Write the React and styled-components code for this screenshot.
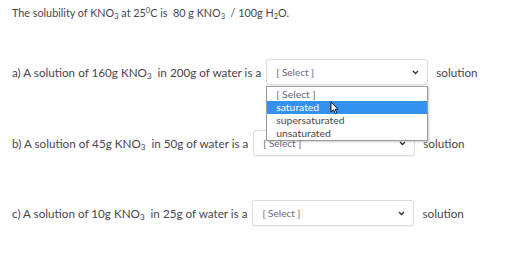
import React from "react";
import styled, { createGlobalStyle } from "styled-components";

const Global = createGlobalStyle`
  html, body { margin: 0; padding: 0; background: #fff; }
  body { font-family: Lato, "Open Sans", sans-serif; color: #4a4a4a; }
`;

const Page = styled.div`
  width: 516px;
  height: 265px;
  padding: 6px 0 0 12px;
  box-sizing: border-box;
`;

const Title = styled.p`
  margin: 0;
  font-size: 10.8px;
  line-height: 14px;
  color: #4a4550;
  sub { font-size: 7.5px; vertical-align: -2px; line-height: 0; }
  sup { font-size: 7.5px; vertical-align: 4px; line-height: 0; }
`;

const Row = styled.div`
  display: flex;
  align-items: center;
  margin-top: ${(p) => p.$top}px;
  height: 26px;
  font-size: 11.7px;
  color: #4a4550;
  sub { font-size: 8px; vertical-align: -2px; line-height: 0; }
`;

const Label = styled.span`
  white-space: nowrap;
`;

const SelectWrap = styled.div`
  position: relative;
  margin-left: ${(p) => p.$gap}px;
  margin-right: 8px;
`;

const SelectBox = styled.div`
  width: 162px;
  height: 26px;
  box-sizing: border-box;
  border: 1px solid #dcdcdc;
  border-radius: 3px;
  box-shadow: 0 1px 2px rgba(0,0,0,0.06);
  display: flex;
  align-items: center;
  justify-content: space-between;
  padding: 0 8px 0 9px;
  font-size: 10px;
  color: #6e6480;
  background: #fff;
  span { white-space: pre; }
`;

const Chevron = () => (
  <svg width="7" height="5" viewBox="0 0 7 5">
    <path d="M1 1 L3.5 3.5 L6 1" fill="none" stroke="#333" strokeWidth="1.4" />
  </svg>
);

const List = styled.ul`
  position: absolute;
  left: 0;
  top: 27px;
  width: 162px;
  margin: 0;
  padding: 1px 0 0;
  list-style: none;
  background: #fff;
  border: 1px solid #9a9a9a;
  box-sizing: border-box;
  box-shadow: 1px 1px 2px rgba(0,0,0,0.2);
  z-index: 2;
  font-size: 10.4px;
`;

const Item = styled.li`
  height: 13px;
  line-height: 13px;
  padding-left: 9px;
  color: ${(p) => (p.$active ? "#fff" : p.$muted ? "#6e6480" : "#4a4a4a")};
  background: ${(p) => (p.$active ? "#3391f0" : "transparent")};
`;

const Cursor = styled.svg`
  position: absolute;
  left: 63px;
  top: 14px;
  z-index: 3;
`;

const Select = ({ gap, open }) => (
  <SelectWrap $gap={gap}>
    <SelectBox>
      <span>[ Select ]</span>
      <Chevron />
    </SelectBox>
    {open && (
      <List>
        <Item $muted>[ Select ]</Item>
        <Item $active>saturated</Item>
        <Item>supersaturated</Item>
        <Item>unsaturated</Item>
        <Cursor width="9" height="14" viewBox="0 0 9 14">
          <path d="M1 1 L1 11 L3.5 8.8 L5.3 12.6 L6.8 11.9 L5.1 8.3 L8 8.3 Z" fill="#fff" stroke="#000" strokeWidth="0.9" strokeLinejoin="round" />
        </Cursor>
      </List>
    )}
  </SelectWrap>
);

export default function App() {
  return (
    <>
      <Global />
      <Page>
        <Title>
          The solubility of KNO<sub>3</sub> at 25<sup>0</sup>C is&nbsp; 80 g KNO<sub>3</sub>&nbsp; / 100g H<sub>2</sub>O.
        </Title>
        <Row $top={39}>
          <Label>a) A solution of 160g KNO<sub>3</sub>&nbsp; in 200g of water is a</Label>
          <Select gap={5} open />
          <Label>solution</Label>
        </Row>
        <Row $top={45}>
          <Label>b) A solution of 45g KNO<sub>3</sub>&nbsp; in 50g of water is a</Label>
          <Select gap={5} />
          <Label>solution</Label>
        </Row>
        <Row $top={44}>
          <Label>c) A solution of 10g KNO<sub>3</sub>&nbsp; in 25g of water is a</Label>
          <Select gap={5} />
          <Label>solution</Label>
        </Row>
      </Page>
    </>
  );
}
